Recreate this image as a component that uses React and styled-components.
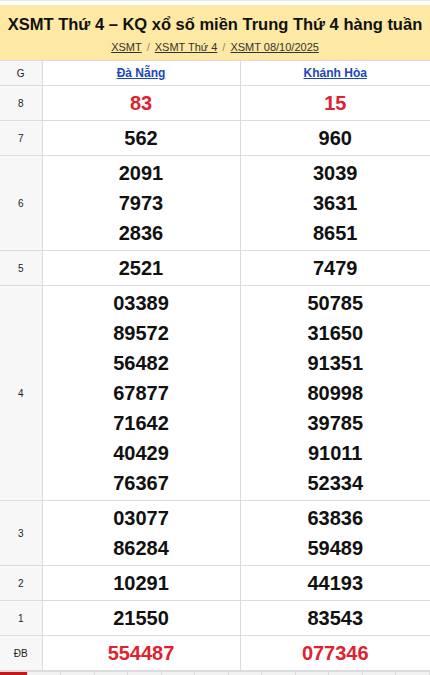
import React from 'react'
import styled, { createGlobalStyle } from 'styled-components'

const Global = createGlobalStyle`
  body {
    margin: 0;
    font-family: 'Liberation Sans', Arial, sans-serif;
    background: #fff;
  }
`

const Page = styled.div`
  width: 430px;
  padding-top: 4px;
  border-top: 1px solid #e6e6e6;
`

const Banner = styled.div`
  background: #fde9a4;
  text-align: center;
  padding: 9px 0 6px;
`

const Title = styled.h1`
  margin: 0;
  font-size: 16.5px;
  line-height: 21px;
  font-weight: 700;
  color: #111;
`

const Crumbs = styled.div`
  margin-top: 5px;
  font-size: 11px;
  line-height: 14px;
  color: #888;

  a {
    color: #333;
    text-decoration: underline;
  }

  span {
    margin: 0 5px;
  }
`

const Table = styled.table`
  width: 100%;
  border-collapse: collapse;
  table-layout: fixed;
`

const Label = styled.td`
  background: #f7f7f7;
  border: 1px solid #dcdcdc;
  border-left: none;
  text-align: center;
  font-size: 10px;
  font-weight: 400;
  color: #222;
`

const Head = styled.th`
  border: 1px solid #dcdcdc;
  border-right: ${p => (p.last ? 'none' : '1px solid #dcdcdc')};
  height: 24px;
  padding: 0;
  font-size: 12px;
  font-weight: 700;
  background: #fff;

  a {
    color: #1c47b8;
    text-decoration: underline;
  }
`

const Cell = styled.td`
  border: 1px solid #dcdcdc;
  border-right: ${p => (p.last ? 'none' : '1px solid #dcdcdc')};
  text-align: center;
  padding: 2px 0;
`

const Num = styled.div`
  font-size: 20px;
  line-height: 30px;
  font-weight: 700;
  color: ${p => (p.red ? '#e0222e' : '#111')};
`

const Tabs = styled.div`
  display: flex;
  height: 4px;
  border-top: 1px solid #dcdcdc;
`

const Tab = styled.div`
  width: ${p => (p.active ? '28px' : '34px')};
  border-right: 1px solid #dcdcdc;
  background: ${p => (p.active ? '#c8161d' : '#f2f2f2')};
`

const rows = [
  { g: '8', a: ['83'], b: ['15'], red: true },
  { g: '7', a: ['562'], b: ['960'] },
  { g: '6', a: ['2091', '7973', '2836'], b: ['3039', '3631', '8651'] },
  { g: '5', a: ['2521'], b: ['7479'] },
  {
    g: '4',
    a: ['03389', '89572', '56482', '67877', '71642', '40429', '76367'],
    b: ['50785', '31650', '91351', '80998', '39785', '91011', '52334'],
  },
  { g: '3', a: ['03077', '86284'], b: ['63836', '59489'] },
  { g: '2', a: ['10291'], b: ['44193'] },
  { g: '1', a: ['21550'], b: ['83543'] },
  { g: 'ĐB', a: ['554487'], b: ['077346'], red: true },
]

export default function App() {
  return (
    <Page>
      <Global />
      <Banner>
        <Title>XSMT Thứ 4 – KQ xổ số miền Trung Thứ 4 hàng tuần</Title>
        <Crumbs>
          <a href="#">XSMT</a>
          <span>/</span>
          <a href="#">XSMT Thứ 4</a>
          <span>/</span>
          <a href="#">XSMT 08/10/2025</a>
        </Crumbs>
      </Banner>
      <Table>
        <colgroup>
          <col style={{ width: 42 }} />
          <col style={{ width: 198 }} />
          <col />
        </colgroup>
        <thead>
          <tr>
            <Label as="th">G</Label>
            <Head><a href="#">Đà Nẵng</a></Head>
            <Head last><a href="#">Khánh Hòa</a></Head>
          </tr>
        </thead>
        <tbody>
          {rows.map(r => (
            <tr key={r.g}>
              <Label>{r.g}</Label>
              <Cell>
                {r.a.map(n => (
                  <Num key={n} red={r.red}>{n}</Num>
                ))}
              </Cell>
              <Cell last>
                {r.b.map(n => (
                  <Num key={n} red={r.red}>{n}</Num>
                ))}
              </Cell>
            </tr>
          ))}
        </tbody>
      </Table>
      <Tabs>
        <Tab active />
        {Array.from({ length: 12 }).map((_, i) => (
          <Tab key={i} />
        ))}
      </Tabs>
    </Page>
  )
}
